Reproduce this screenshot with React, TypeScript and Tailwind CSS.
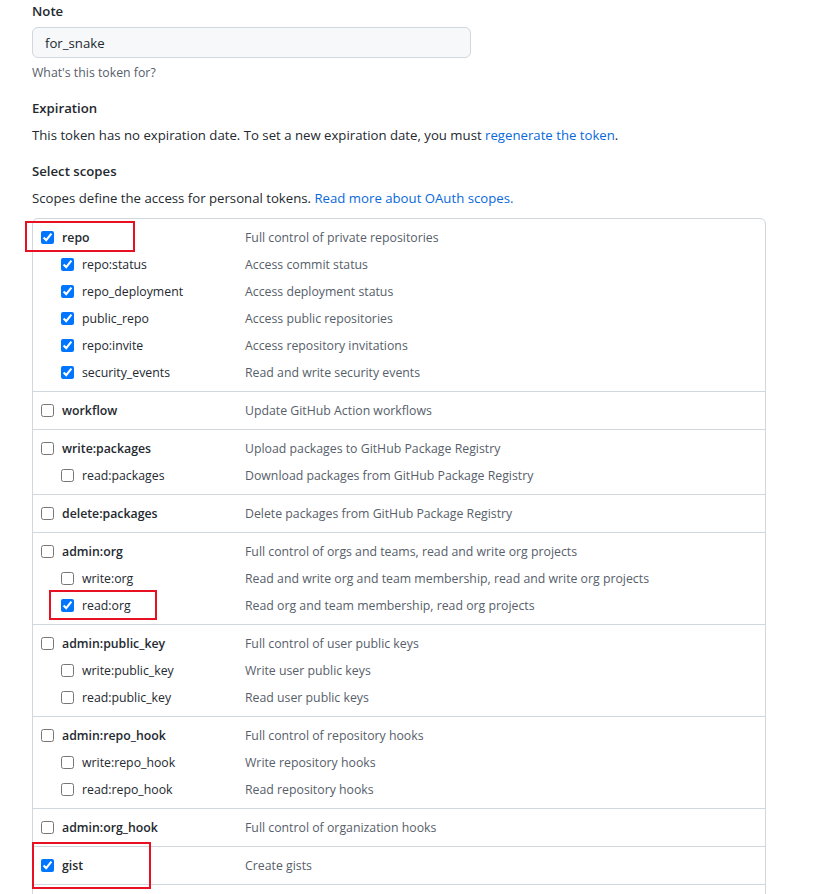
type Scope = { name: string; desc: string; checked?: boolean; mark?: string };
type Group = { main: Scope; subs?: Scope[] };

const groups: Group[] = [
  {
    main: { name: 'repo', desc: 'Full control of private repositories', checked: true, mark: 'repo' },
    subs: [
      { name: 'repo:status', desc: 'Access commit status', checked: true },
      { name: 'repo_deployment', desc: 'Access deployment status', checked: true },
      { name: 'public_repo', desc: 'Access public repositories', checked: true },
      { name: 'repo:invite', desc: 'Access repository invitations', checked: true },
      { name: 'security_events', desc: 'Read and write security events', checked: true },
    ],
  },
  { main: { name: 'workflow', desc: 'Update GitHub Action workflows' } },
  {
    main: { name: 'write:packages', desc: 'Upload packages to GitHub Package Registry' },
    subs: [{ name: 'read:packages', desc: 'Download packages from GitHub Package Registry' }],
  },
  { main: { name: 'delete:packages', desc: 'Delete packages from GitHub Package Registry' } },
  {
    main: { name: 'admin:org', desc: 'Full control of orgs and teams, read and write org projects' },
    subs: [
      { name: 'write:org', desc: 'Read and write org and team membership, read and write org projects' },
      { name: 'read:org', desc: 'Read org and team membership, read org projects', checked: true, mark: 'sub' },
    ],
  },
  {
    main: { name: 'admin:public_key', desc: 'Full control of user public keys' },
    subs: [
      { name: 'write:public_key', desc: 'Write user public keys' },
      { name: 'read:public_key', desc: 'Read user public keys' },
    ],
  },
  {
    main: { name: 'admin:repo_hook', desc: 'Full control of repository hooks' },
    subs: [
      { name: 'write:repo_hook', desc: 'Write repository hooks' },
      { name: 'read:repo_hook', desc: 'Read repository hooks' },
    ],
  },
  { main: { name: 'admin:org_hook', desc: 'Full control of organization hooks' } },
  { main: { name: 'gist', desc: 'Create gists', checked: true, mark: 'gist' } },
];

// red annotation boxes drawn over the screenshot
function Mark({ kind }: { kind?: string }) {
  if (kind === 'repo')
    return <span className="pointer-events-none absolute left-[-16px] top-[-7px] h-[31px] w-[110px] border-2 border-[#e81123]" />;
  if (kind === 'sub')
    return <span className="pointer-events-none absolute left-[-12px] top-[-6px] h-[30px] w-[108px] border-2 border-[#e81123]" />;
  if (kind === 'gist')
    return <span className="pointer-events-none absolute left-[-9px] top-[-14px] h-[47px] w-[119px] border-2 border-[#e81123]" />;
  return null;
}

function Row({ scope, sub }: { scope: Scope; sub?: boolean }) {
  return (
    <div className="flex h-[27px] items-center text-[12.3px]">
      <div className={`flex w-[212px] shrink-0 items-center ${sub ? 'pl-[28px]' : 'pl-[8px]'}`}>
        <span className="relative flex items-center">
          <Mark kind={scope.mark} />
          <input type="checkbox" checked={!!scope.checked} readOnly className="h-[13px] w-[13px]" />
          <span className={`ml-[8px] text-[#24292f] ${sub ? '' : 'font-semibold'}`}>{scope.name}</span>
        </span>
      </div>
      <div className="text-[#57606a]">{scope.desc}</div>
    </div>
  );
}

export default function App() {
  return (
    <div
      className="min-h-[894px] bg-white px-8 pt-[1px] text-[13.2px] leading-5 text-[#24292f]"
      style={{ fontFamily: '"Open Sans", "Noto Sans", sans-serif' }}
    >
      <div className="font-semibold">Note</div>
      <div className="mt-[6px] flex h-[31px] w-[439px] items-center rounded-md border border-[#d0d7de] bg-[#f6f8fa] px-3">
        for_snake
      </div>
      <div className="mt-[6px] text-[12.3px] leading-[18px] text-[#57606a]">What's this token for?</div>

      <div className="mt-4 font-semibold">Expiration</div>
      <div className="mt-[7px]">
        This token has no expiration date. To set a new expiration date, you must{' '}
        <span className="text-[#0969da]">regenerate the token</span>.
      </div>

      <div className="mt-4 font-semibold">Select scopes</div>
      <div className="mt-[7px]">
        Scopes define the access for personal tokens. <span className="text-[#0969da]">Read more about OAuth scopes.</span>
      </div>

      <div className="mt-[10px] w-[734px] rounded-md border border-[#d0d7de]">
        {groups.map((g, i) => (
          <div key={g.main.name} className={`py-[5px] ${i > 0 ? 'border-t border-[#d0d7de]' : ''}`}>
            <Row scope={g.main} />
            {g.subs?.map((s) => <Row key={s.name} scope={s} sub />)}
          </div>
        ))}
        <div className="h-[37px] border-t border-[#d0d7de]" />
      </div>
    </div>
  );
}
